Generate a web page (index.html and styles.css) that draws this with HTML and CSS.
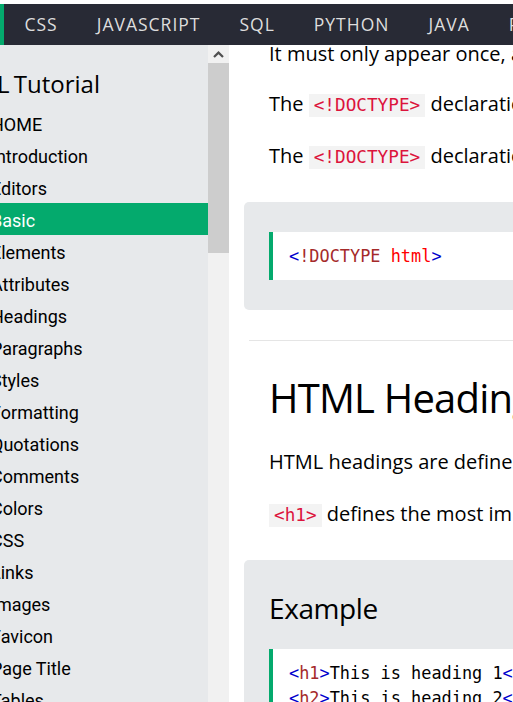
FILE: index.html
```html
<!DOCTYPE html>
<html lang="en">
<head>
<meta charset="utf-8">
<title>HTML Basic Examples</title>
<link rel="stylesheet" href="styles.css">
</head>
<body>
<header class="topnav">
  <span class="topnav-active" aria-hidden="true"></span>
  <a class="topnav-link" href="#">CSS</a>
  <a class="topnav-link" href="#">JAVASCRIPT</a>
  <a class="topnav-link" href="#">SQL</a>
  <a class="topnav-link" href="#">PYTHON</a>
  <a class="topnav-link" href="#">JAVA</a>
  <a class="topnav-link" href="#">PHP</a>
  <a class="topnav-link" href="#">HOW TO</a>
</header>
<div class="layout">
  <nav class="sidebar">
    <h2 class="sidebar-title">HTML Tutorial</h2>
    <a class="side-link" href="#">HOME</a>
    <a class="side-link" href="#">Introduction</a>
    <a class="side-link" href="#">Editors</a>
    <a class="side-link active" href="#">Basic</a>
    <a class="side-link" href="#">Elements</a>
    <a class="side-link" href="#">Attributes</a>
    <a class="side-link" href="#">Headings</a>
    <a class="side-link" href="#">Paragraphs</a>
    <a class="side-link" href="#">Styles</a>
    <a class="side-link" href="#">Formatting</a>
    <a class="side-link" href="#">Quotations</a>
    <a class="side-link" href="#">Comments</a>
    <a class="side-link" href="#">Colors</a>
    <a class="side-link" href="#">CSS</a>
    <a class="side-link" href="#">Links</a>
    <a class="side-link" href="#">Images</a>
    <a class="side-link" href="#">Favicon</a>
    <a class="side-link" href="#">Page Title</a>
    <a class="side-link" href="#">Tables</a>
    <a class="side-link" href="#">Lists</a>
  </nav>
  <div class="scrollbar" aria-hidden="true">
    <div class="scroll-btn">
      <svg width="11" height="7" viewBox="0 0 11 7"><polyline points="1,6 5.5,1.6 10,6" fill="none" stroke="#505050" stroke-width="2.2"/></svg>
    </div>
    <div class="scroll-thumb"></div>
  </div>
  <main class="main">
    <p class="lead">It must only appear once, at the top of the page (before any HTML tags).</p>
    <p>The <code class="codespan">&lt;!DOCTYPE&gt;</code> declaration is not case sensitive.</p>
    <p>The <code class="codespan">&lt;!DOCTYPE&gt;</code> declaration for HTML5 is:</p>
    <div class="example">
      <div class="code"><span class="c-tag">&lt;</span><span class="c-name">!DOCTYPE</span> <span class="c-attr">html</span><span class="c-tag">&gt;</span></div>
    </div>
    <hr class="divider">
    <h1 class="page-title">HTML Headings</h1>
    <p>HTML headings are defined with the <code class="codespan">&lt;h1&gt;</code> to <code class="codespan">&lt;h6&gt;</code> tags.</p>
    <p><code class="codespan">&lt;h1&gt;</code> defines the most important heading. <code class="codespan">&lt;h6&gt;</code> defines the least important heading:</p>
    <div class="example">
      <h2 class="example-title">Example</h2>
      <div class="code"><span class="c-tag">&lt;</span><span class="c-name">h1</span><span class="c-tag">&gt;</span>This is heading 1<span class="c-tag">&lt;</span><span class="c-name">/h1</span><span class="c-tag">&gt;</span>
<span class="c-tag">&lt;</span><span class="c-name">h2</span><span class="c-tag">&gt;</span>This is heading 2<span class="c-tag">&lt;</span><span class="c-name">/h2</span><span class="c-tag">&gt;</span>
<span class="c-tag">&lt;</span><span class="c-name">h3</span><span class="c-tag">&gt;</span>This is heading 3<span class="c-tag">&lt;</span><span class="c-name">/h3</span><span class="c-tag">&gt;</span></div>
    </div>
  </main>
</div>
</body>
</html>
```
FILE: styles.css
```css
* {
  box-sizing: border-box;
}

html,
body {
  margin: 0;
  height: 100%;
  overflow: hidden;
}

body {
  padding-top: 4px;
  background: #ffffff;
  color: #000000;
  font-family: "Open Sans", "Liberation Sans", sans-serif;
}

/* top navigation */
.topnav {
  position: relative;
  z-index: 2;
  display: flex;
  align-items: center;
  height: 41px;
  background: #282a35;
  white-space: nowrap;
  overflow: hidden;
}

.topnav-active {
  flex: none;
  width: 4px;
  height: 100%;
  background: #04aa6d;
}

.topnav-link {
  flex: none;
  padding: 0 19.5px;
  font-size: 17.5px;
  line-height: 41px;
  letter-spacing: 1px;
  color: #dddddd;
  text-decoration: none;
}

.topnav-active + .topnav-link {
  padding-left: 20.5px;
}

/* page body */
.layout {
  display: flex;
  height: calc(100vh - 45px);
}

.sidebar {
  flex: none;
  width: 208px;
  padding-top: 21px;
  background: #e7e9eb;
  overflow: hidden;
}

.sidebar-title {
  margin: 0 0 5px -55.5px;
  font-size: 24px;
  font-weight: normal;
  line-height: 36px;
  word-spacing: -2px;
  white-space: nowrap;
}

.side-link {
  display: block;
  height: 32px;
  margin-left: -9px;
  padding-top: 3px;
  font-family: Roboto, "Open Sans", sans-serif;
  font-size: 18px;
  line-height: 29px;
  color: #000000;
  text-decoration: none;
  white-space: nowrap;
}

.side-link.active {
  background: #04aa6d;
  color: #ffffff;
}

.scrollbar {
  flex: none;
  width: 21px;
  display: flex;
  flex-direction: column;
  background: #f1f1f1;
}

.scroll-btn {
  height: 18px;
  display: flex;
  align-items: center;
  justify-content: center;
}

.scroll-thumb {
  height: 190px;
  background: #cdcdcd;
}

.main {
  flex: none;
  width: 1100px;
  padding: 0 40px;
  background: #ffffff;
}

.main p {
  margin: 20px 0;
  font-size: 20px;
  line-height: 30px;
}

.main p.lead {
  margin-top: -6px;
}

.codespan {
  display: inline-block;
  margin-bottom: 3.5px;
  padding: 1px 5px;
  font-family: "DejaVu Sans Mono", "Liberation Mono", monospace;
  font-size: 17.7px;
  line-height: 21px;
  color: #dc143c;
  background: #f3f3f3;
}

.example {
  margin: 30px 0 30px -25px;
  padding: 10px 25px;
  background: #e7e9eb;
  border-radius: 5px;
}

.example-title {
  margin: 19px 0 22px;
  font-size: 28px;
  font-weight: normal;
  letter-spacing: -0.4px;
}

.code {
  margin: 20px 0;
  padding: 11.5px 16px;
  background: #ffffff;
  border-left: 4px solid #04aa6d;
  font-family: "DejaVu Sans Mono", "Liberation Mono", monospace;
  font-size: 16.9px;
  line-height: 25px;
  white-space: pre;
  color: #000000;
}

.c-tag {
  color: #0000cd;
}

.c-name {
  color: #a52a2a;
}

.c-attr {
  color: #ff0000;
}

.divider {
  margin: 30px 0 0 -20px;
  border: 0;
  border-top: 1px solid #e5e5e5;
}

.page-title {
  margin: 29px 0 22px;
  font-size: 40px;
  font-weight: normal;
  letter-spacing: -0.8px;
}
```
